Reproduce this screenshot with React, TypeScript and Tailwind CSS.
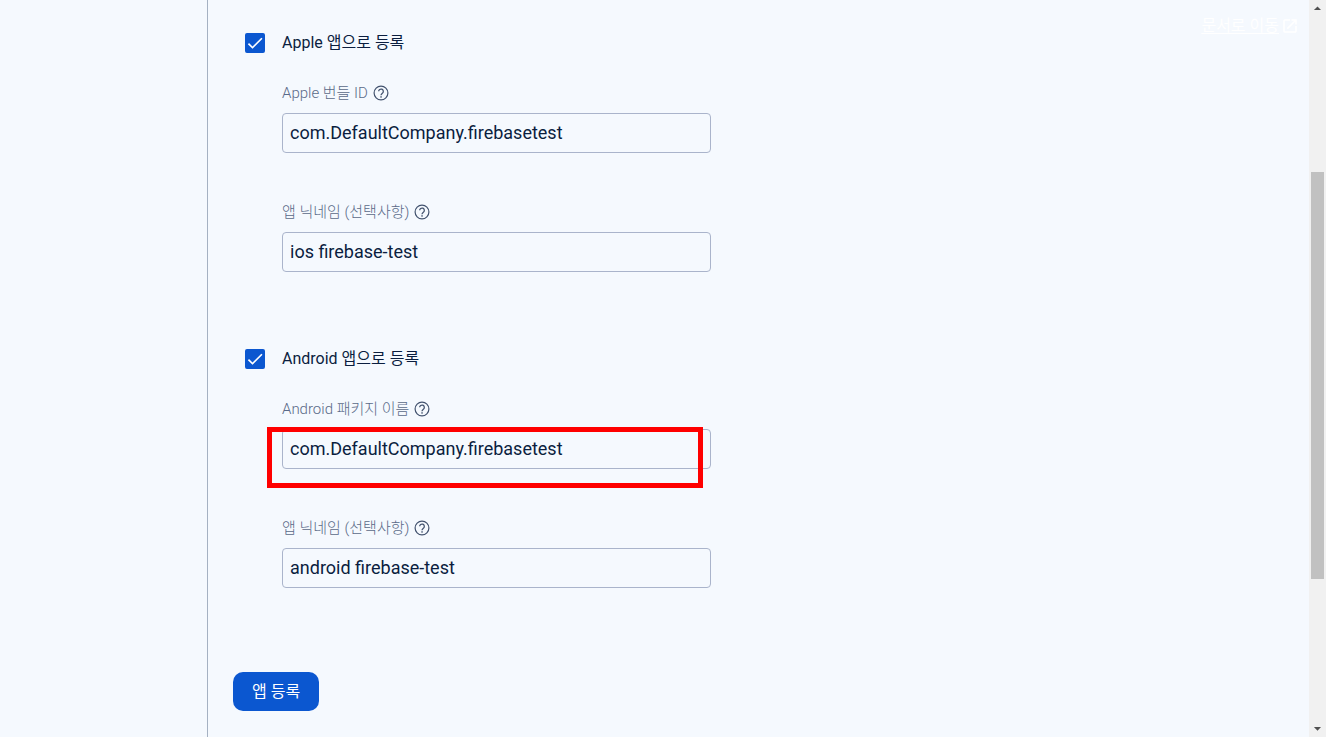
import { useId, useState } from "react";
import { MdArrowDropDown, MdArrowDropUp, MdCheck, MdOpenInNew } from "react-icons/md";

type FieldProps = { label: string; initial: string; highlighted?: boolean };

function HelpIcon() {
  return (
    <svg viewBox="0 0 24 24" className="size-[18px]" fill="none" aria-hidden="true">
      <circle cx="12" cy="12" r="9.2" stroke="currentColor" strokeWidth="1.6" />
      <path
        d="M8.9 9.8a3.1 3.1 0 1 1 5.4 2.1c-.9 1-2.3 1.5-2.3 3.2"
        stroke="currentColor"
        strokeWidth="1.7"
      />
      <rect x="11.1" y="16.3" width="1.9" height="1.9" fill="currentColor" />
    </svg>
  );
}

function Field({ label, initial, highlighted = false }: FieldProps) {
  const id = useId();
  const [value, setValue] = useState(initial);
  return (
    <div>
      <div className="flex h-5 items-center gap-1 text-[#5a6a88]">
        <label htmlFor={id} className="text-[15px] font-light">
          {label}
        </label>
        <button type="button" aria-label="도움말" className="text-[#42526e]">
          <HelpIcon />
        </button>
      </div>
      <div className="relative mt-2.5">
        <input
          id={id}
          type="text"
          value={value}
          onChange={(e) => setValue(e.target.value)}
          className="block h-10 w-full rounded border border-[#aab4cb] bg-transparent px-[7px] pb-0.5 text-lg text-[#0b1e3f] outline-none"
        />
        {highlighted && (
          <div className="pointer-events-none absolute -top-0.5 right-2 -bottom-[19px] -left-[15px] border-[5px] border-[#ff0000]" />
        )}
      </div>
    </div>
  );
}

type SectionProps = { title: string; fields: FieldProps[] };

function PlatformSection({ title, fields }: SectionProps) {
  const id = useId();
  const [checked, setChecked] = useState(true);
  return (
    <section>
      <div className="flex h-5 items-center gap-[17px] pl-3">
        <span className="grid size-5 place-items-center">
          <input
            id={id}
            type="checkbox"
            checked={checked}
            onChange={(e) => setChecked(e.target.checked)}
            className="col-start-1 row-start-1 size-5 appearance-none rounded-xs border-2 border-[#0b57d0] checked:bg-[#0b57d0]"
          />
          {checked && (
            <MdCheck className="pointer-events-none col-start-1 row-start-1 size-5 text-white" />
          )}
        </span>
        <label htmlFor={id} className="text-base text-[#0b1e3f]">
          {title}
        </label>
      </div>
      <div className="mt-[30px] ml-[49px] flex max-w-[429px] flex-col gap-[49px]">
        {fields.map((field) => (
          <Field key={field.label} {...field} />
        ))}
      </div>
    </section>
  );
}

function ScrollRail() {
  return (
    <div aria-hidden="true" className="sticky top-0 flex h-screen w-[17px] shrink-0 flex-col items-center bg-[#f1f1f1] text-[#505050]">
      <MdArrowDropUp className="size-[17px] shrink-0" />
      <div className="flex w-full flex-1 flex-col items-center">
        <div className="basis-[22%]" />
        <div className="w-[13px] basis-[58%] bg-[#c1c1c1]" />
      </div>
      <MdArrowDropDown className="size-[17px] shrink-0" />
    </div>
  );
}

const sections: SectionProps[] = [
  {
    title: "Apple 앱으로 등록",
    fields: [
      { label: "Apple 번들 ID", initial: "com.DefaultCompany.firebasetest" },
      { label: "앱 닉네임 (선택사항)", initial: "ios firebase-test" },
    ],
  },
  {
    title: "Android 앱으로 등록",
    fields: [
      { label: "Android 패키지 이름", initial: "com.DefaultCompany.firebasetest", highlighted: true },
      { label: "앱 닉네임 (선택사항)", initial: "android firebase-test" },
    ],
  },
];

export default function App() {
  return (
    <div className="flex min-h-screen bg-[#f5f9fe] font-['Roboto','Noto_Sans_CJK_KR',sans-serif]">
      <div className="w-52 shrink-0 border-r border-[#a5b1c2]" />
      <main className="flex min-w-0 flex-1 items-start justify-between pr-2.5 pl-[25px]">
        <form className="min-w-0 flex-1 pt-[33px] pb-[26px]" onSubmit={(e) => e.preventDefault()}>
          <div className="flex flex-col gap-[77px]">
            {sections.map((section) => (
              <PlatformSection key={section.title} {...section} />
            ))}
          </div>
          <button
            type="submit"
            className="mt-[84px] h-[39px] rounded-[10px] bg-[#0b57d0] px-[19px] text-base text-white"
          >
            앱 등록
          </button>
        </form>
        <a href="#docs" className="mt-4 flex h-5 items-center gap-0.5 text-base text-white">
          <span className="underline underline-offset-2">문서로 이동</span>
          <MdOpenInNew className="size-[18px]" />
        </a>
      </main>
      <ScrollRail />
    </div>
  );
}
